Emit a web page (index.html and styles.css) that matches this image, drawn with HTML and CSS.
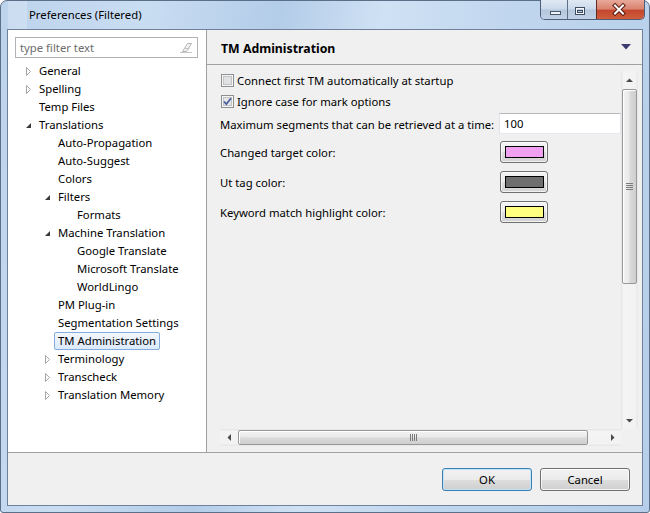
FILE: index.html
```html
<!DOCTYPE html>
<html>
<head>
<meta charset="utf-8">
<link rel="stylesheet" href="styles.css">
</head>
<body>
<div class="window">
  <div class="titlebar">
    <div class="appicon"></div>
    <div class="title">Preferences (Filtered)</div>
    <div class="controls">
      <div class="ctl min"><svg width="27" height="20"><rect x="10.5" y="11.5" width="10" height="3" fill="#eef3f9" stroke="#4a586b"/></svg></div>
      <div class="ctl max"><svg width="29" height="20"><rect x="8.5" y="7.5" width="9" height="7" fill="none" stroke="#3f4c5e"/><rect x="9.5" y="8.5" width="7" height="5" fill="none" stroke="#f4f7fb"/><rect x="10.5" y="10.5" width="5" height="2" fill="none" stroke="#3f4c5e"/></svg></div>
      <div class="ctl close"><svg width="48" height="20"><path d="M18 5.5 L26 13.5 M26 5.5 L18 13.5" stroke="#5a1a10" stroke-width="4" stroke-linecap="square"/><path d="M18 5.5 L26 13.5 M26 5.5 L18 13.5" stroke="#ffffff" stroke-width="2" stroke-linecap="square"/></svg></div>
    </div>
  </div>
  <div class="client">
    <div class="main">
      <div class="left">
        <div class="filter">
          <span class="placeholder">type filter text</span>
          <svg class="eraser" width="14" height="12"><path d="M3.5 9.5 L8.5 1.5 H12.5 L7.5 9.5 Z" fill="#f4f4f4" stroke="#b4b4b4"/><path d="M5.5 6.5 H10.5" stroke="#c4c4c4"/><path d="M1 10.5 H13" stroke="#c8c8c8"/></svg>
        </div>
        <div class="tree">
          <div class="node lv0"><span class="tw"><svg width="10" height="18"><path d="M1.5 5.5 L5.5 9.5 L1.5 13.5 Z" fill="#fff" stroke="#a6a6a6"/></svg></span><span class="lbl">General</span></div>
          <div class="node lv0"><span class="tw"><svg width="10" height="18"><path d="M1.5 5.5 L5.5 9.5 L1.5 13.5 Z" fill="#fff" stroke="#a6a6a6"/></svg></span><span class="lbl">Spelling</span></div>
          <div class="node lv0"><span class="tw"></span><span class="lbl">Temp Files</span></div>
          <div class="node lv0"><span class="tw"><svg width="10" height="18"><path d="M6 7 L6 12 L1 12 Z" fill="#3a3a3a"/></svg></span><span class="lbl">Translations</span></div>
          <div class="node lv1"><span class="tw"></span><span class="lbl">Auto-Propagation</span></div>
          <div class="node lv1"><span class="tw"></span><span class="lbl">Auto-Suggest</span></div>
          <div class="node lv1"><span class="tw"></span><span class="lbl">Colors</span></div>
          <div class="node lv1"><span class="tw"><svg width="10" height="18"><path d="M6 7 L6 12 L1 12 Z" fill="#3a3a3a"/></svg></span><span class="lbl">Filters</span></div>
          <div class="node lv2"><span class="tw"></span><span class="lbl">Formats</span></div>
          <div class="node lv1"><span class="tw"><svg width="10" height="18"><path d="M6 7 L6 12 L1 12 Z" fill="#3a3a3a"/></svg></span><span class="lbl">Machine Translation</span></div>
          <div class="node lv2"><span class="tw"></span><span class="lbl">Google Translate</span></div>
          <div class="node lv2"><span class="tw"></span><span class="lbl">Microsoft Translate</span></div>
          <div class="node lv2"><span class="tw"></span><span class="lbl">WorldLingo</span></div>
          <div class="node lv1"><span class="tw"></span><span class="lbl">PM Plug-in</span></div>
          <div class="node lv1"><span class="tw"></span><span class="lbl">Segmentation Settings</span></div>
          <div class="node lv1"><span class="tw"></span><span class="lbl selected">TM Administration</span></div>
          <div class="node lv1"><span class="tw"><svg width="10" height="18"><path d="M1.5 5.5 L5.5 9.5 L1.5 13.5 Z" fill="#fff" stroke="#a6a6a6"/></svg></span><span class="lbl">Terminology</span></div>
          <div class="node lv1"><span class="tw"><svg width="10" height="18"><path d="M1.5 5.5 L5.5 9.5 L1.5 13.5 Z" fill="#fff" stroke="#a6a6a6"/></svg></span><span class="lbl">Transcheck</span></div>
          <div class="node lv1"><span class="tw"><svg width="10" height="18"><path d="M1.5 5.5 L5.5 9.5 L1.5 13.5 Z" fill="#fff" stroke="#a6a6a6"/></svg></span><span class="lbl">Translation Memory</span></div>
        </div>
      </div>
      <div class="right">
        <div class="pagehead">
          <span class="pagetitle">TM Administration</span>
          <svg class="menu-tri" width="10" height="6"><path d="M0 0 H10 L5 5.5 Z" fill="#3b3a72"/></svg>
        </div>
        <div class="pagebody">
          <div class="scrollbox">
            <div class="content">
              <div class="crow r1">
                <svg class="cb" width="13" height="13"><rect x="0.5" y="0.5" width="12" height="12" fill="#f6f6f6" stroke="#8e8f8f"/><rect x="2.5" y="2.5" width="8" height="8" fill="#e2e2e2" stroke="#c0c4c8"/></svg>
                <span>Connect first TM automatically at startup</span>
              </div>
              <div class="crow r2">
                <svg class="cb" width="13" height="13"><rect x="0.5" y="0.5" width="12" height="12" fill="#f6f6f6" stroke="#8e8f8f"/><rect x="2.5" y="2.5" width="8" height="8" fill="#e6e6e6" stroke="#c0c4c8"/><path d="M3 6.5 L5.3 9.2 L10 3.2" fill="none" stroke="#4a5fa0" stroke-width="1.8"/></svg>
                <span>Ignore case for mark options</span>
              </div>
              <div class="frow f-text">
                <div class="flabel">Maximum segments that can be retrieved at a time:</div>
                <div class="textin">100</div>
              </div>
              <div class="frow f-first">
                <div class="flabel">Changed target color:</div>
                <div class="cbtn"><div class="swatch pink"></div></div>
              </div>
              <div class="frow f-next">
                <div class="flabel">Ut tag color:</div>
                <div class="cbtn"><div class="swatch gray"></div></div>
              </div>
              <div class="frow f-next">
                <div class="flabel">Keyword match highlight color:</div>
                <div class="cbtn"><div class="swatch yellow"></div></div>
              </div>
            </div>
            <div class="vscroll">
              <div class="sbtn"><svg width="7" height="4"><path d="M0 4 L3.5 0.5 L7 4 Z" fill="#4a4a4a"/></svg></div>
              <div class="vtrack">
                <div class="vthumb"><svg width="7" height="7"><path d="M0 0.5 H7 M0 2.5 H7 M0 4.5 H7 M0 6.5 H7" stroke="#7a7a7a"/></svg></div>
              </div>
              <div class="sbtn"><svg width="7" height="4"><path d="M0 0 L3.5 3.5 L7 0 Z" fill="#4a4a4a"/></svg></div>
            </div>
            <div class="hscroll">
              <div class="sbtn"><svg width="4" height="7"><path d="M4 0 L0.5 3.5 L4 7 Z" fill="#4a4a4a"/></svg></div>
              <div class="htrack">
                <div class="hthumb"><svg width="7" height="7"><path d="M0.5 0 V7 M2.5 0 V7 M4.5 0 V7 M6.5 0 V7" stroke="#7a7a7a"/></svg></div>
              </div>
              <div class="sbtn"><svg width="4" height="7"><path d="M0 0 L3.5 3.5 L0 7 Z" fill="#4a4a4a"/></svg></div>
            </div>
            <div class="corner"></div>
          </div>
        </div>
      </div>
    </div>
    <div class="buttonbar">
      <button class="btn default">OK</button>
      <button class="btn">Cancel</button>
    </div>
  </div>
</div>
</body>
</html>
```
FILE: styles.css
```css
html, body {
  margin: 0;
  padding: 0;
  background: #ffffff;
}
body {
  font-family: "Noto Sans", "DejaVu Sans", sans-serif;
  font-size: 11.3px;
  color: #000;
}
.window {
  width: 650px;
  height: 513px;
  box-sizing: border-box;
  border: 1px solid #5c6f88;
  border-radius: 7px 7px 3px 3px;
  padding: 0 6px 6px 6px;
  display: flex;
  flex-direction: column;
  background: linear-gradient(100deg, #bcd3ec 0%, #c9ddf2 20%, #b3cce8 38%, #cfe1f4 52%, #c0d6ee 70%, #b6cee9 100%);
}
.titlebar {
  height: 28px;
  display: flex;
  align-items: flex-start;
  flex-shrink: 0;
}
.appicon {
  width: 19px;
  height: 28px;
  margin-left: 1px;
  background: rgba(255, 255, 255, 0.22);
}
.title {
  margin-left: 2px;
  padding-top: 6px;
  line-height: 16px;
  color: #000;
}
.controls {
  margin-left: auto;
  margin-right: -2px;
  margin-top: -1px;
  display: flex;
  height: 20px;
  border: 1px solid #4e5e74;
  border-top: none;
  border-radius: 0 0 5px 5px;
  overflow: hidden;
  box-sizing: border-box;
}
.ctl {
  height: 20px;
}
.ctl svg { display: block; }
.ctl.min {
  width: 26px;
  border-right: 1px solid #5f6f85;
  background: linear-gradient(#dfe9f4 0%, #cbd9ea 45%, #b5c7dd 50%, #c2d3e6 100%);
}
.ctl.max {
  width: 28px;
  border-right: 1px solid #5f2a22;
  background: linear-gradient(#dfe9f4 0%, #cbd9ea 45%, #b5c7dd 50%, #c2d3e6 100%);
}
.ctl.min svg { margin-left: -1px; }
.ctl.max svg { margin-left: -1px; }
.ctl.close {
  width: 47px;
  background: linear-gradient(#e9a99b 0%, #d9826f 45%, #c4472d 52%, #d1603f 100%);
}
.client {
  flex: 1;
  border: 1px solid #6f809a;
  background: #f0f0f0;
  display: flex;
  flex-direction: column;
  min-height: 0;
}
.main {
  height: 422px;
  display: flex;
  flex-shrink: 0;
}
.left {
  width: 199px;
  box-sizing: border-box;
  background: #fff;
  border-right: 1px solid #a0a0a0;
  padding: 7px 8px 0 7px;
}
.filter {
  height: 21px;
  box-sizing: border-box;
  border: 1px solid #b0b3b8;
  display: flex;
  align-items: center;
  padding: 0 4px 0 4px;
}
.placeholder {
  color: #6d6d6d;
  line-height: 16px;
  flex: 1;
}
.eraser { display: block; margin-right: 0; }
.tree {
  margin-top: 4px;
}
.node {
  height: 18px;
  display: flex;
  align-items: center;
}
.lv0 { padding-left: 10px; }
.lv1 { padding-left: 29px; }
.lv2 { padding-left: 48px; }
.tw {
  width: 10px;
  height: 18px;
  flex-shrink: 0;
}
.tw svg { display: block; }
.lbl {
  line-height: 16px;
  padding: 0 3px;
  border: 1px solid transparent;
  border-radius: 2px;
  white-space: nowrap;
}
.lbl.selected {
  border-color: #84acdd;
  background: linear-gradient(#f2f7fe, #dceafc);
}
.right {
  flex: 1;
  display: flex;
  flex-direction: column;
  min-width: 0;
}
.pagehead {
  height: 35px;
  box-sizing: border-box;
  border-bottom: 1px solid #a0a0a0;
  padding: 3px 11px 0 14px;
  display: flex;
  align-items: center;
  justify-content: space-between;
  flex-shrink: 0;
}
.pagetitle {
  font-weight: bold;
  font-size: 12.3px;
  line-height: 16px;
}
.menu-tri { display: block; margin-bottom: 4px; }
.pagebody {
  flex: 1;
  padding: 6px 4px 5px 13px;
}
.scrollbox {
  display: grid;
  grid-template-columns: 401px 17px;
  grid-template-rows: 358px 17px;
}
.content {
  overflow: hidden;
  display: flex;
  flex-direction: column;
  padding-top: 1px;
}
.crow {
  height: 16px;
  display: flex;
  align-items: center;
  line-height: 16px;
  white-space: nowrap;
}
.crow span { margin-top: 1px; }
.crow .cb { display: block; margin-left: 1px; margin-right: 3px; }
.r2 { margin-top: 5px; }
.frow {
  display: flex;
  align-items: center;
}
.f-text { height: 21px; margin-top: 4px; }
.f-first { height: 22px; margin-top: 7px; }
.f-next { height: 22px; margin-top: 8px; }
.flabel {
  width: 279px;
  flex-shrink: 0;
  line-height: 16px;
  margin-top: 2px;
  white-space: nowrap;
}
.textin {
  width: 122px;
  height: 21px;
  box-sizing: border-box;
  background: #fff;
  border: 1px solid #e3e9ef;
  border-top-color: #b5b8bd;
  border-left-color: #e2e3ea;
  border-right-color: #e2e3ea;
  padding-left: 4px;
  line-height: 19px;
}
.cbtn {
  width: 48px;
  height: 22px;
  box-sizing: border-box;
  margin-left: 1px;
  border: 1px solid #707070;
  border-radius: 3px;
  background: linear-gradient(#f4f4f4 0%, #ececec 50%, #dfdfdf 51%, #d2d2d2 100%);
  padding: 4px 0 0 4px;
  box-shadow: inset 0 0 0 1px rgba(255,255,255,0.7);
}
.swatch {
  width: 39px;
  height: 12px;
  box-sizing: border-box;
  border: 1px solid #000;
}
.swatch.pink { background: #f0a0f0; }
.swatch.gray { background: #6e6e6e; }
.swatch.yellow { background: #ffff80; }
.vscroll {
  display: flex;
  flex-direction: column;
  background: linear-gradient(90deg, #e4e4e4 0%, #f4f4f4 15%, #f2f2f2 85%, #e6e6e6 100%);
}
.sbtn {
  width: 17px;
  height: 17px;
  display: flex;
  align-items: center;
  justify-content: center;
  flex-shrink: 0;
}
.sbtn svg { display: block; }
.vtrack {
  flex: 1;
  padding-top: 1px;
}
.vthumb {
  margin-left: 1px;
  width: 15px;
  height: 195px;
  box-sizing: border-box;
  border: 1px solid #979797;
  border-radius: 2px;
  background: linear-gradient(90deg, #f3f3f3 0%, #e9e9e9 45%, #d9d9d9 55%, #cfcfcf 100%);
  box-shadow: inset 1px 1px 0 #ffffff;
  display: flex;
  align-items: center;
  justify-content: center;
}
.vthumb svg { display: block; }
.hscroll {
  display: flex;
  background: linear-gradient(#e4e4e4 0%, #f4f4f4 15%, #f2f2f2 85%, #e6e6e6 100%);
}
.htrack {
  flex: 1;
  padding-left: 1px;
  display: flex;
  align-items: center;
}
.hthumb {
  width: 350px;
  height: 15px;
  box-sizing: border-box;
  border: 1px solid #979797;
  border-radius: 2px;
  background: linear-gradient(#f3f3f3 0%, #e9e9e9 45%, #d9d9d9 55%, #cfcfcf 100%);
  box-shadow: inset 1px 1px 0 #ffffff;
  display: flex;
  align-items: center;
  justify-content: center;
}
.hthumb svg { display: block; }
.corner { background: #f0f0f0; }
.buttonbar {
  flex: 1;
  border-top: 1px solid #a0a0a0;
  display: flex;
  justify-content: flex-end;
  align-items: flex-start;
  padding: 15px 12px 0 0;
  gap: 8px;
}
.btn {
  width: 90px;
  height: 23px;
  box-sizing: border-box;
  border: 1px solid #707070;
  border-radius: 3px;
  background: linear-gradient(#f2f2f2 0%, #ebebeb 50%, #dddddd 51%, #cfcfcf 100%);
  box-shadow: inset 0 0 0 1px rgba(255,255,255,0.75);
  font-family: "Noto Sans", "DejaVu Sans", sans-serif;
  font-size: 11.3px;
  color: #000;
  padding: 0;
  line-height: 19px;
}
.btn.default {
  border-color: #3c7fb1;
  box-shadow: inset 0 0 0 1px #bfe3f8;
}
```
